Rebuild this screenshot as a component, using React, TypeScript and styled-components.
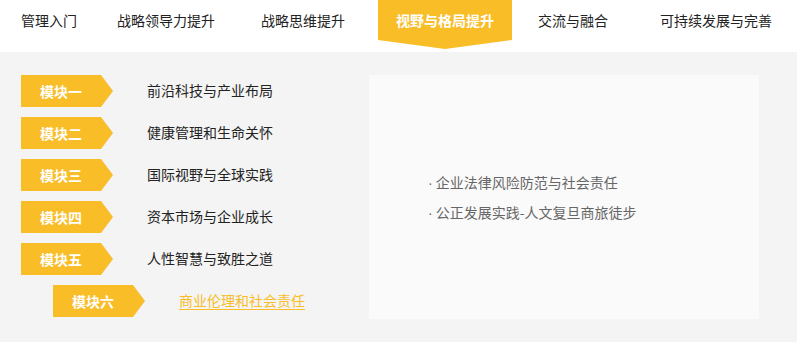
import React from "react";
import styled, { createGlobalStyle } from "styled-components";

const GlobalStyle = createGlobalStyle`
  html, body {
    margin: 0;
    padding: 0;
    background: #f4f4f4;
    font-family: "Noto Sans CJK SC", "Noto Sans", sans-serif;
  }
`

const Page = styled.div`
  width: 797px;
  height: 342px;
  background: #f4f4f4;
  overflow: hidden;
`

const Nav = styled.ul`
  display: flex;
  margin: 0;
  padding: 0;
  list-style: none;
  height: 52px;
  background: #fff;
`

const Tab = styled.li<{ $active?: boolean; $ml: number }>`
  position: relative;
  margin-left: ${p => p.$ml}px;
  padding: 0 18px;
  height: 40px;
  line-height: 40px;
  font-size: 14px;
  white-space: nowrap;
  color: ${p => (p.$active ? "#fff" : "#222")};
  font-weight: ${p => (p.$active ? "bold" : "normal")};
  background: ${p => (p.$active ? "#f9bd28" : "transparent")};
  cursor: pointer;

  ${p =>
    p.$active &&
    `
    &::after {
      content: "";
      position: absolute;
      left: 0;
      right: 0;
      top: 40px;
      height: 9px;
      background: #f9bd28;
      clip-path: polygon(0 0, 100% 0, 50% 100%);
    }
  `}
`

const Content = styled.div`
  display: flex;
  padding: 23px 0 0 21px;
`

const ModuleList = styled.div`
  display: flex;
  flex-direction: column;
  gap: 10px;
  width: 348px;
`

const ModuleRow = styled.div<{ $indent?: boolean }>`
  display: flex;
  align-items: center;
  height: 32px;
  padding-left: ${p => (p.$indent ? 32 : 0)}px;
`

const Badge = styled.div`
  width: 92px;
  height: 32px;
  padding-right: 12px;
  box-sizing: border-box;
  background: #f9bd28;
  clip-path: polygon(0 0, 80px 0, 92px 50%, 80px 100%, 0 100%);
  color: #fff;
  font-weight: bold;
  font-size: 14px;
  line-height: 32px;
  text-align: center;
`

const Title = styled.a<{ $active?: boolean }>`
  margin-left: 34px;
  margin-top: -2px;
  font-size: 14px;
  color: ${p => (p.$active ? "#f9bd28" : "#222")};
  text-decoration: ${p => (p.$active ? "underline" : "none")};
  text-underline-offset: 3px;
  cursor: pointer;
`

const Panel = styled.div`
  width: 390px;
  height: 244px;
  background: #fafafa;
  display: flex;
  flex-direction: column;
  justify-content: center;
  padding-left: 59px;
  box-sizing: border-box;
  gap: 9px;
`

const Item = styled.div`
  font-size: 14px;
  line-height: 20px;
  color: #666;
`

const Dot = styled.span`
  font-family: "Liberation Sans", sans-serif;
  margin-right: 3px;
`

const tabs = [
  { name: "管理入门", ml: 3 },
  { name: "战略领导力提升", ml: 4 },
  { name: "战略思维提升", ml: 10 },
  { name: "视野与格局提升", ml: 15, active: true },
  { name: "交流与融合", ml: 8 },
  { name: "可持续发展与完善", ml: 16 },
]

const modules = [
  { tag: "模块一", title: "前沿科技与产业布局" },
  { tag: "模块二", title: "健康管理和生命关怀" },
  { tag: "模块三", title: "国际视野与全球实践" },
  { tag: "模块四", title: "资本市场与企业成长" },
  { tag: "模块五", title: "人性智慧与致胜之道" },
  { tag: "模块六", title: "商业伦理和社会责任", active: true },
]

const items = ["企业法律风险防范与社会责任", "公正发展实践-人文复旦商旅徒步"]

const App = () => {
  return (
    <Page>
      <GlobalStyle />
      <Nav>
        {tabs.map(t => (
          <Tab key={t.name} $ml={t.ml} $active={t.active}>
            {t.name}
          </Tab>
        ))}
      </Nav>
      <Content>
        <ModuleList>
          {modules.map(m => (
            <ModuleRow key={m.tag} $indent={m.active}>
              <Badge>{m.tag}</Badge>
              <Title $active={m.active}>{m.title}</Title>
            </ModuleRow>
          ))}
        </ModuleList>
        <Panel>
          {items.map(i => (
            <Item key={i}>
              <Dot>·</Dot>
              {i}
            </Item>
          ))}
        </Panel>
      </Content>
    </Page>
  )
}

export default App
